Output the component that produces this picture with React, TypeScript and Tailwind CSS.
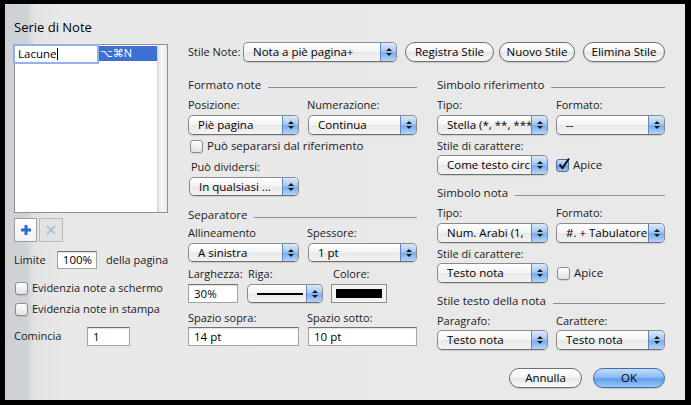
import type { ReactNode } from 'react'

function Arrows() {
  return (
    <div className="flex w-[16px] shrink-0 flex-col items-center justify-center gap-[2px] border-l border-[#5f86bd] bg-[linear-gradient(#dbe9fb,#a6c9f3_45%,#77aced_55%,#b5d6fa)]">
      <svg width="6" height="3" viewBox="0 0 6 3"><path d="M3 0L6 3H0Z" fill="#1a1a1a" /></svg>
      <svg width="6" height="3" viewBox="0 0 6 3"><path d="M0 0H6L3 3Z" fill="#1a1a1a" /></svg>
    </div>
  )
}

function Popup({ className = '', children }: { className?: string; children?: ReactNode }) {
  return (
    <div className={`flex overflow-hidden rounded-[5px] border border-[#8b8b8b] border-b-[#6e6e6e] bg-[linear-gradient(#ffffff,#f4f4f4_48%,#e8e8e8_52%,#f3f3f3)] shadow-[0_1px_1px_rgba(0,0,0,0.12)] ${className}`}>
      <div className="flex min-w-0 flex-1 items-center overflow-hidden whitespace-nowrap pl-[9px] text-[11.5px] text-black">{children}</div>
      <Arrows />
    </div>
  )
}

function Pill({ className = '', children, primary = false }: { className?: string; children: ReactNode; primary?: boolean }) {
  return (
    <div
      className={`flex items-center justify-center rounded-full border text-[11.5px] text-black shadow-[0_1px_1px_rgba(0,0,0,0.15)] ${
        primary
          ? 'border-[#3f6db3] bg-[linear-gradient(#c3dcf9,#8dbcf2_45%,#5f9ceb_55%,#9dcaf7)]'
          : 'border-[#6f6f6f] bg-[linear-gradient(#ffffff,#f5f5f5_48%,#e6e6e6_52%,#fafafa)]'
      } ${className}`}
    >
      {children}
    </div>
  )
}

function Field({ className = '', children }: { className?: string; children?: ReactNode }) {
  return (
    <div className={`flex items-center border border-[#a3a3a3] border-t-[#737373] bg-white pl-[5px] text-[11.5px] text-black shadow-[inset_0_1px_1px_rgba(0,0,0,0.12)] ${className}`}>
      {children}
    </div>
  )
}

function Check({ checked = false }: { checked?: boolean }) {
  if (checked) {
    return (
      <div className="relative h-[13px] w-[13px] shrink-0 rounded-[3px] border border-[#4e6f9e] bg-[linear-gradient(#cfe1f8,#86b5ee_50%,#5c98e6_55%,#a4cbf6)]">
        <svg className="absolute -top-[3px] left-[0px]" width="14" height="14" viewBox="0 0 14 14">
          <path d="M2.5 7.5L5.5 11L12 1.5" fill="none" stroke="#111" strokeWidth="2" />
        </svg>
      </div>
    )
  }
  return <div className="h-[13px] w-[13px] shrink-0 rounded-[3px] border border-[#8c8c8c] bg-[linear-gradient(#ffffff,#f0f0f0_50%,#e3e3e3)] shadow-[0_1px_1px_rgba(0,0,0,0.1)]" />
}

function Heading({ title, className = '' }: { title: string; className?: string }) {
  return (
    <div className={`flex h-[20px] items-center ${className}`}>
      <span className="text-[11.5px] text-[#1d1d1d]">{title}</span>
      <div className="ml-[7px] mt-[5px] h-px flex-1 bg-[#8e8e8e]" />
    </div>
  )
}

function Labels({ a, b, className = '', offset = 'w-[119px]' }: { a: string; b?: string; className?: string; offset?: string }) {
  return (
    <div className={`flex h-[16px] items-center text-[11px] text-[#1a1a1a] ${className}`}>
      <span className={offset}>{a}</span>
      {b && <span>{b}</span>}
    </div>
  )
}

export default function App() {
  return (
    <div className="flex h-[405px] w-[691px] bg-black pb-[5px] pl-[5px] pr-[6px] pt-[4px] font-['Open_Sans','DejaVu_Sans',sans-serif]">
      <div className="flex flex-1 flex-col bg-[linear-gradient(to_right,#cdd0d4,#cfd2d6_22px,#e3e3e3_30px,#e8e8e8_60px,#e9e9e9)] pl-[9px] pr-[20px] pt-[16px]">
        <div className="flex">
          {/* left column */}
          <div className="flex w-[154px] flex-col whitespace-nowrap">
            <div className="flex h-[16px] items-center text-[13px] text-black">Serie di Note</div>
            <div className="mt-[8px] flex h-[169px] border border-[#8f8f8f] bg-white">
              <div className="flex-1 pt-[1px]">
                <div className="flex h-[15px] items-center bg-[#3d6fd4]">
                  <div className="z-10 flex h-[16px] w-[82px] items-center bg-white pl-[3px] text-[11.5px] text-black shadow-[0_0_0_2px_#8fb3ea]">
                    Lacune<span className="ml-px h-[12px] w-px bg-black" />
                  </div>
                  <span className="ml-[3px] text-[11px] text-white">⌥⌘N</span>
                </div>
              </div>
              <div className="w-[10px] border-l border-[#d3d3d3] bg-[linear-gradient(to_right,#e4e4e4,#f7f7f7_50%,#e6e6e6)]" />
            </div>
            <div className="mt-[5px] flex h-[24px] gap-[2px]">
              <div className="flex w-[23px] items-center justify-center border border-[#9d9d9d] bg-[linear-gradient(#ffffff,#f1f1f1)]">
                <svg width="12" height="12" viewBox="0 0 12 12">
                  <path d="M6 1V11M1 6H11" stroke="#2c6bd1" strokeWidth="3" />
                </svg>
              </div>
              <div className="flex w-[24px] items-center justify-center border border-[#b9b9b9] bg-[#e2e2e2]">
                <svg width="10" height="10" viewBox="0 0 10 10">
                  <path d="M1 1L9 9M9 1L1 9" stroke="#9db4d2" strokeWidth="1.3" />
                </svg>
              </div>
            </div>
            <div className="mt-[9px] flex h-[18px] items-center text-[11px] text-[#1a1a1a]">
              <span className="w-[45px]">Limite</span>
              <Field className="h-[18px] w-[42px]">100%</Field>
              <span className="ml-[9px]">della pagina</span>
            </div>
            <div className="mt-[11px] flex h-[16px] items-center gap-[4px] pl-px text-[11px] text-[#1a1a1a]">
              <Check />
              <span>Evidenzia note a schermo</span>
            </div>
            <div className="mt-[5px] flex h-[16px] items-center gap-[4px] pl-px text-[11px] text-[#1a1a1a]">
              <Check />
              <span>Evidenzia note in stampa</span>
            </div>
            <div className="mt-[10px] flex h-[19px] items-center text-[11px] text-[#1a1a1a]">
              <span className="w-[73px]">Comincia</span>
              <Field className="h-[19px] w-[43px]">1</Field>
            </div>
          </div>

          {/* right area */}
          <div className="ml-[20px] flex w-[477px] flex-col">
            <div className="mt-[22px] flex h-[20px] items-center">
              <span className="w-[55px] text-[11px] text-[#1a1a1a]">Stile Note:</span>
              <Popup className="h-[20px] w-[154px]">Nota a piè pagina+</Popup>
              <Pill className="ml-[8px] h-[20px] w-[89px]">Registra Stile</Pill>
              <Pill className="ml-[5px] h-[20px] w-[76px]">Nuovo Stile</Pill>
              <Pill className="ml-[8px] h-[20px] w-[82px]">Elimina Stile</Pill>
            </div>

            <div className="mt-[13px] flex gap-[20px]">
              {/* middle column */}
              <div className="flex w-[229px] flex-col">
                <Heading title="Formato note" />
                <Labels className="mt-[2px]" a="Posizione:" b="Numerazione:" />
                <div className="mt-[2px] flex gap-[9px]">
                  <Popup className="h-[20px] w-[111px]">Piè pagina</Popup>
                  <Popup className="h-[20px] w-[109px]">Continua</Popup>
                </div>
                <div className="mt-[3px] flex h-[16px] items-center gap-[4px] pl-[2px] text-[11.5px] text-[#1a1a1a]">
                  <Check />
                  <span>Può separarsi dal riferimento</span>
                </div>
                <Labels className="mt-[5px] pl-[3px]" a="Può dividersi:" offset="" />
                <Popup className="ml-px mt-[2px] h-[19px] w-[110px]">In qualsiasi ...</Popup>

                <Heading className="mt-[9px]" title="Separatore" />
                <Labels a="Allineamento" b="Spessore:" />
                <div className="mt-[2px] flex gap-[9px]">
                  <Popup className="h-[19px] w-[111px]">A sinistra</Popup>
                  <Popup className="h-[19px] w-[109px]">1 pt</Popup>
                </div>
                <div className="mt-[4px] flex h-[16px] items-center text-[11px] text-[#1a1a1a]">
                  <span className="w-[60px]">Larghezza:</span>
                  <span className="w-[85px]">Riga:</span>
                  <span>Colore:</span>
                </div>
                <div className="mt-[2px] flex h-[19px]">
                  <Field className="h-[19px] w-[50px]">30%</Field>
                  <Popup className="ml-[9px] h-[19px] w-[76px]">
                    <div className="h-[2px] w-[46px] bg-black" />
                  </Popup>
                  <div className="ml-[8px] h-[19px] w-[56px] border border-[#8d8d8d] bg-[#f3f3f3] p-[4px]">
                    <div className="h-full w-full bg-black" />
                  </div>
                </div>
                <Labels className="mt-[7px]" a="Spazio sopra:" b="Spazio sotto:" />
                <div className="mt-[1px] flex gap-[9px]">
                  <Field className="h-[19px] w-[111px]">14 pt</Field>
                  <Field className="h-[19px] w-[109px]">10 pt</Field>
                </div>
              </div>

              {/* right column */}
              <div className="flex w-[228px] flex-col">
                <Heading title="Simbolo riferimento" />
                <Labels className="mt-[2px]" a="Tipo:" b="Formato:" />
                <div className="mt-[2px] flex gap-[8px]">
                  <Popup className="h-[20px] w-[111px]">Stella (*, **, ***</Popup>
                  <Popup className="h-[20px] w-[109px]">--</Popup>
                </div>
                <Labels className="mt-[3px]" a="Stile di carattere:" offset="" />
                <div className="mt-[1px] flex h-[20px] items-center">
                  <Popup className="h-[20px] w-[111px]">Come testo circ</Popup>
                  <div className="ml-[8px] flex items-center gap-[4px] text-[11.5px] text-[#1a1a1a]">
                    <Check checked />
                    <span>Apice</span>
                  </div>
                </div>

                <Heading className="mt-[8px]" title="Simbolo nota" />
                <Labels className="mt-[2px]" a="Tipo:" b="Formato:" />
                <div className="mt-[2px] flex gap-[8px]">
                  <Popup className="h-[20px] w-[111px]">Num. Arabi (1,</Popup>
                  <Popup className="h-[20px] w-[109px]">#. + Tabulatore</Popup>
                </div>
                <Labels className="mt-[3px]" a="Stile di carattere:" offset="" />
                <div className="mt-[1px] flex h-[20px] items-center">
                  <Popup className="h-[20px] w-[111px]">Testo nota</Popup>
                  <div className="ml-[9px] flex items-center gap-[4px] text-[11.5px] text-[#1a1a1a]">
                    <Check />
                    <span>Apice</span>
                  </div>
                </div>

                <Heading className="mt-[8px]" title="Stile testo della nota" />
                <Labels className="mt-[2px]" a="Paragrafo:" b="Carattere:" />
                <div className="mt-[1px] flex gap-[8px]">
                  <Popup className="h-[20px] w-[111px]">Testo nota</Popup>
                  <Popup className="h-[20px] w-[109px]">Testo nota</Popup>
                </div>
              </div>
            </div>
          </div>
        </div>

        <div className="mt-[18px] flex justify-end gap-[11px]">
          <Pill className="h-[20px] w-[73px]">Annulla</Pill>
          <Pill primary className="h-[20px] w-[72px]">OK</Pill>
        </div>
      </div>
    </div>
  )
}
